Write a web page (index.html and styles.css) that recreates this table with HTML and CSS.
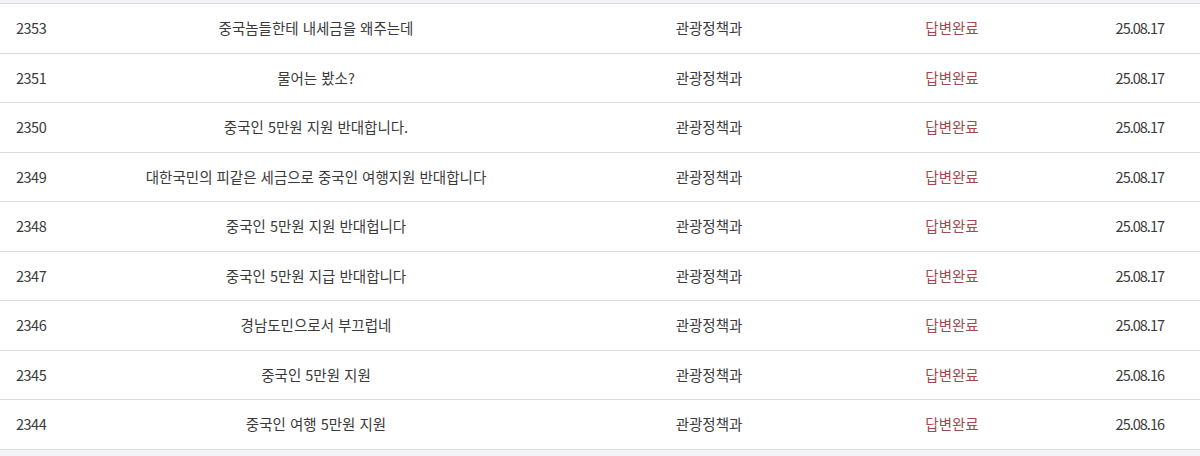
FILE: index.html
```html
<!DOCTYPE html>
<html lang="ko">
<head>
<meta charset="utf-8">
<link rel="stylesheet" href="styles.css">
</head>
<body>
<div class="page">
  <div class="list">
    <div class="row"><div class="c num">2353</div><div class="c title">중국놈들한테 내세금을 왜주는데</div><div class="c dept">관광정책과</div><div class="c status">답변완료</div><div class="c date">25.08.17</div></div>
    <div class="row"><div class="c num">2351</div><div class="c title">물어는 봤소?</div><div class="c dept">관광정책과</div><div class="c status">답변완료</div><div class="c date">25.08.17</div></div>
    <div class="row"><div class="c num">2350</div><div class="c title">중국인 5만원 지원 반대합니다.</div><div class="c dept">관광정책과</div><div class="c status">답변완료</div><div class="c date">25.08.17</div></div>
    <div class="row"><div class="c num">2349</div><div class="c title">대한국민의 피같은 세금으로 중국인 여행지원 반대합니다</div><div class="c dept">관광정책과</div><div class="c status">답변완료</div><div class="c date">25.08.17</div></div>
    <div class="row"><div class="c num">2348</div><div class="c title">중국인 5만원 지원 반대헙니다</div><div class="c dept">관광정책과</div><div class="c status">답변완료</div><div class="c date">25.08.17</div></div>
    <div class="row"><div class="c num">2347</div><div class="c title">중국인 5만원 지급 반대합니다</div><div class="c dept">관광정책과</div><div class="c status">답변완료</div><div class="c date">25.08.17</div></div>
    <div class="row"><div class="c num">2346</div><div class="c title">경남도민으로서 부끄럽네</div><div class="c dept">관광정책과</div><div class="c status">답변완료</div><div class="c date">25.08.17</div></div>
    <div class="row"><div class="c num">2345</div><div class="c title">중국인 5만원 지원</div><div class="c dept">관광정책과</div><div class="c status">답변완료</div><div class="c date">25.08.16</div></div>
    <div class="row"><div class="c num">2344</div><div class="c title">중국인 여행 5만원 지원</div><div class="c dept">관광정책과</div><div class="c status">답변완료</div><div class="c date">25.08.16</div></div>
  </div>
</div>
</body>
</html>
```
FILE: styles.css
```css
html, body {
  margin: 0;
  padding: 0;
  background: #f3f4f8;
}
.page {
  padding-top: 3px;
  height: 456px;
  box-sizing: border-box;
  font-family: "Noto Sans CJK KR", "Noto Sans", sans-serif;
  font-size: 14.5px;
  color: #3a3a3a;
}
.list {
  background: #fff;
  border-top: 1px solid #dcdcdc;
}
.row {
  display: grid;
  grid-template-columns: 120px 392px 394px 92px 202px;
  align-items: center;
  height: 48.5px;
  border-bottom: 1px solid #dcdcdc;
}
.c {
  white-space: nowrap;
  text-align: center;
  line-height: 20px;
}
.num {
  text-align: left;
  padding-left: 16px;
  letter-spacing: -0.5px;
}
.status {
  color: #a04a4f;
}
.date {
  text-align: right;
  padding-right: 36px;
  letter-spacing: -1px;
}
```
